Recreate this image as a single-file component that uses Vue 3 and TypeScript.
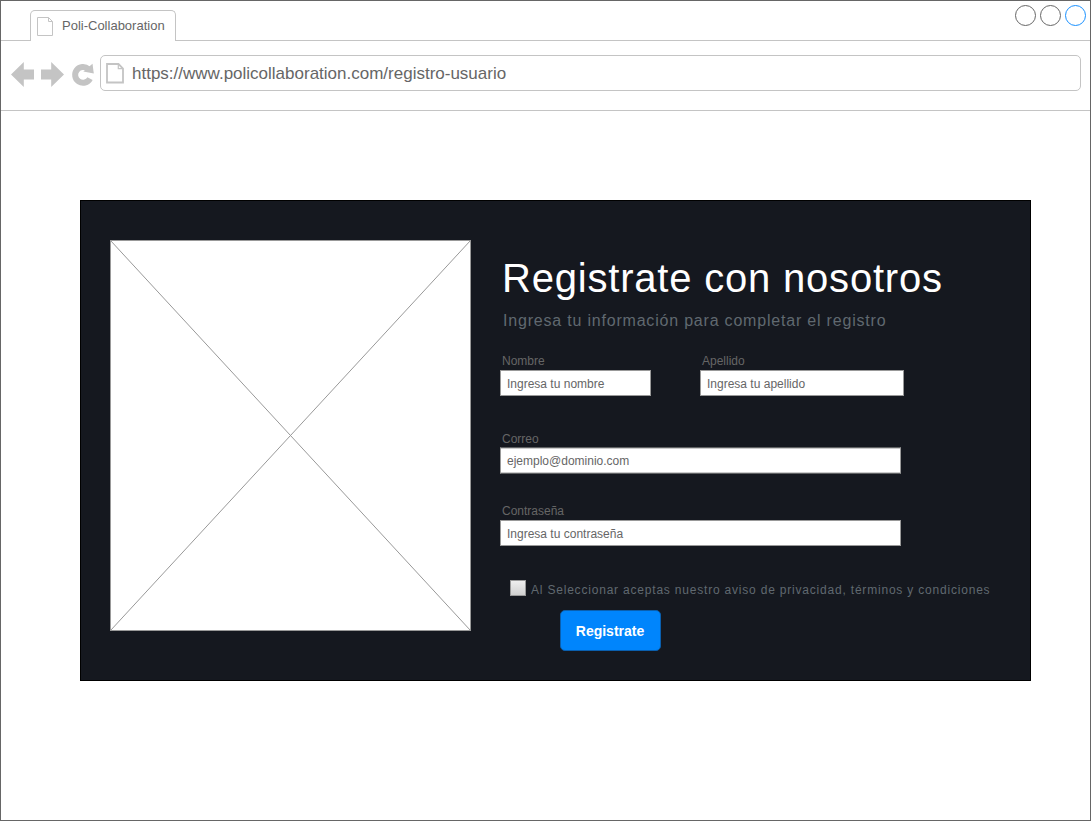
<script setup lang="ts">
import { ref } from 'vue'

interface Field {
  id: string
  label: string
  placeholder: string
  type: string
}

const windowButtons: string[] = ['plain', 'plain', 'accent']

const fields: Field[] = [
  { id: 'nombre', label: 'Nombre', placeholder: 'Ingresa tu nombre', type: 'text' },
  { id: 'apellido', label: 'Apellido', placeholder: 'Ingresa tu apellido', type: 'text' },
  { id: 'correo', label: 'Correo', placeholder: 'ejemplo@dominio.com', type: 'text' },
  { id: 'contrasena', label: 'Contraseña', placeholder: 'Ingresa tu contraseña', type: 'password' },
]

const values = ref<Record<string, string>>({ nombre: '', apellido: '', correo: '', contrasena: '' })
const accepted = ref(false)
</script>

<template>
  <div class="window">
    <header class="tabs">
      <div class="tab">
        <svg class="tab-icon" width="17" height="20" viewBox="0 0 17 20">
          <path d="M.5 .5H11.5L15.5 4.5V18.5H.5ZM11.5 .5V4.5H15.5" fill="#fff" stroke="#c4c4c4" />
        </svg>
        <span>Poli-Collaboration</span>
      </div>
      <div class="controls">
        <svg v-for="(kind, i) in windowButtons" :key="i" width="22" height="22" viewBox="0 0 22 22">
          <circle cx="11.5" cy="11.5" r="10" class="control" :class="kind" />
        </svg>
      </div>
    </header>

    <nav class="toolbar">
      <svg class="nav-icons" width="84" height="26" viewBox="0 0 84 26">
        <path d="M0 12.5L12.8 0V7.5H23V17.5H12.8V25Z" fill="#c4c4c4" />
        <path d="M53 12.5L40.2 0V7.5H30V17.5H40.2V25Z" fill="#c4c4c4" />
        <path d="M79 16.6A7.9 7.9 0 1 1 77.3 7" fill="none" stroke="#c4c4c4" stroke-width="6" />
        <path d="M81.5 1.8L82.8 11.6L72.3 9.5Z" fill="#c4c4c4" />
      </svg>
      <div class="address">
        <svg class="page-icon" width="18" height="21" viewBox="0 0 18 21">
          <path d="M1 1H12.5L17 5.5V19.5H1Z" fill="#fff" stroke="#c4c4c4" stroke-width="1.8" />
          <path d="M12.3 1V5.7H17" fill="none" stroke="#c4c4c4" stroke-width="1.2" />
        </svg>
        <span>https://www.policollaboration.com/registro-usuario</span>
      </div>
    </nav>

    <main class="page">
      <section class="panel">
        <svg class="picture" width="361" height="391" viewBox="0 0 361 391">
          <rect x=".5" y=".5" width="360" height="390" />
          <path d="M.5 .5L360.5 390.5M360.5 .5L.5 390.5" />
        </svg>
        <form class="form" @submit.prevent>
          <h1>Registrate con nosotros</h1>
          <p class="subtitle">Ingresa tu información para completar el registro</p>
          <div class="fields">
            <div v-for="f in fields" :key="f.id" class="field" :class="f.id">
              <label :for="f.id">{{ f.label }}</label>
              <input :id="f.id" v-model="values[f.id]" :type="f.type" :placeholder="f.placeholder" />
            </div>
          </div>
          <label class="terms">
            <input v-model="accepted" type="checkbox" />
            <span>Al Seleccionar aceptas nuestro aviso de privacidad, términos y condiciones</span>
          </label>
          <button type="submit">Registrate</button>
        </form>
      </section>
    </main>
  </div>
</template>

<style>
body {
  margin: 0;
  background: #fff;
}
</style>

<style scoped>
* {
  box-sizing: border-box;
}

.window {
  width: 1091px;
  height: 821px;
  border: 1px solid #666;
  background: #fff;
  color: #666;
  font-family: "Liberation Sans", Arial, sans-serif;
  overflow: hidden;
}

.tabs {
  display: flex;
  justify-content: space-between;
  height: 40px;
  padding: 9px 4px 0 29px;
  border-bottom: 1px solid #c4c4c4;
}

.tab {
  display: flex;
  width: 146px;
  height: 31px;
  padding: 6px 0 0 6px;
  border: 1px solid #c4c4c4;
  border-bottom: 0;
  border-radius: 5px 5px 0 0;
  background: #fff;
  font-size: 13px;
  line-height: 17px;
  white-space: nowrap;
}

.tab span {
  margin-left: 8px;
}

.controls {
  display: flex;
  gap: 3px;
  margin-top: -6px;
}

.control {
  fill: #fff;
  stroke: #666;
}

.control.accent {
  stroke: #1890ff;
}

.toolbar {
  display: flex;
  height: 70px;
  padding: 14px 9px 0 10px;
  border-bottom: 1px solid #c4c4c4;
}

.nav-icons {
  flex: none;
  margin: 7px 5px 0 0;
}

.address {
  display: flex;
  flex: 1;
  height: 36px;
  padding: 7px 0 0 5px;
  border: 1px solid #c4c4c4;
  border-radius: 5px;
  font-size: 17px;
  line-height: 22px;
}

.address span {
  margin-left: 8px;
}

.page {
  padding: 89px 59px 0 79px;
}

.panel {
  display: flex;
  width: 951px;
  height: 481px;
  padding: 39px 0 0 29px;
  border: 1px solid #000;
  background: #15181f;
}

.picture {
  flex: none;
  fill: #fff;
  stroke: #999;
}

.form {
  margin-left: 29px;
  padding-top: 15px;
}

h1 {
  height: 46px;
  margin: 0 0 0 2px;
  color: #fff;
  font-size: 40px;
  font-weight: 400;
  line-height: 46px;
  letter-spacing: 0.8px;
  white-space: nowrap;
}

.subtitle {
  margin: 10px 0 0 3px;
  color: #606970;
  font-size: 16px;
  line-height: 20px;
  letter-spacing: 0.8px;
}

.fields {
  display: grid;
  grid-template-columns: 200px 204px;
  grid-template-rows: 78px 72px 44px;
  margin-top: 21px;
}

.field {
  display: flex;
  flex-direction: column;
  font-size: 12px;
}

.field label {
  height: 18px;
  padding-left: 2px;
  line-height: 18px;
}

.field input {
  flex: none;
  height: 26px;
  padding: 1px 6px 0;
  border: 1px solid #999;
  border-radius: 0;
  background: #fff;
  color: #666;
  font: 12px "Liberation Sans", Arial, sans-serif;
  outline: none;
}

.field input::placeholder {
  color: #666;
  opacity: 1;
}

.nombre input {
  width: 151px;
}

.correo,
.contrasena {
  grid-column: 1 / 3;
  width: 401px;
}

.correo label {
  height: 17px;
}

.correo input {
  height: 27px;
  padding-bottom: 1px;
  border-top-color: #5f6163;
  border-bottom-color: #5f6163;
  box-shadow: inset 0 1px #ccc, inset 0 -1px #ccc;
}

.terms {
  display: flex;
  margin: 34px 0 0 10px;
  color: #606970;
  font-size: 12px;
  line-height: 20px;
  letter-spacing: 0.8px;
  white-space: nowrap;
}

.terms input {
  flex: none;
  width: 16px;
  height: 16px;
  margin: 0 5px 0 0;
  border: 1px solid #999;
  background: linear-gradient(#eee, #d0d0d0);
  appearance: none;
}

.terms input:checked {
  background: #0085fc;
}

button {
  display: block;
  width: 101px;
  height: 41px;
  margin: 10px 0 0 60px;
  padding: 0 1px 0 0;
  border: 1px solid #0a5fae;
  border-radius: 5px;
  background: #0085fc;
  color: #fff;
  font: bold 14px "Liberation Sans", Arial, sans-serif;
}
</style>
